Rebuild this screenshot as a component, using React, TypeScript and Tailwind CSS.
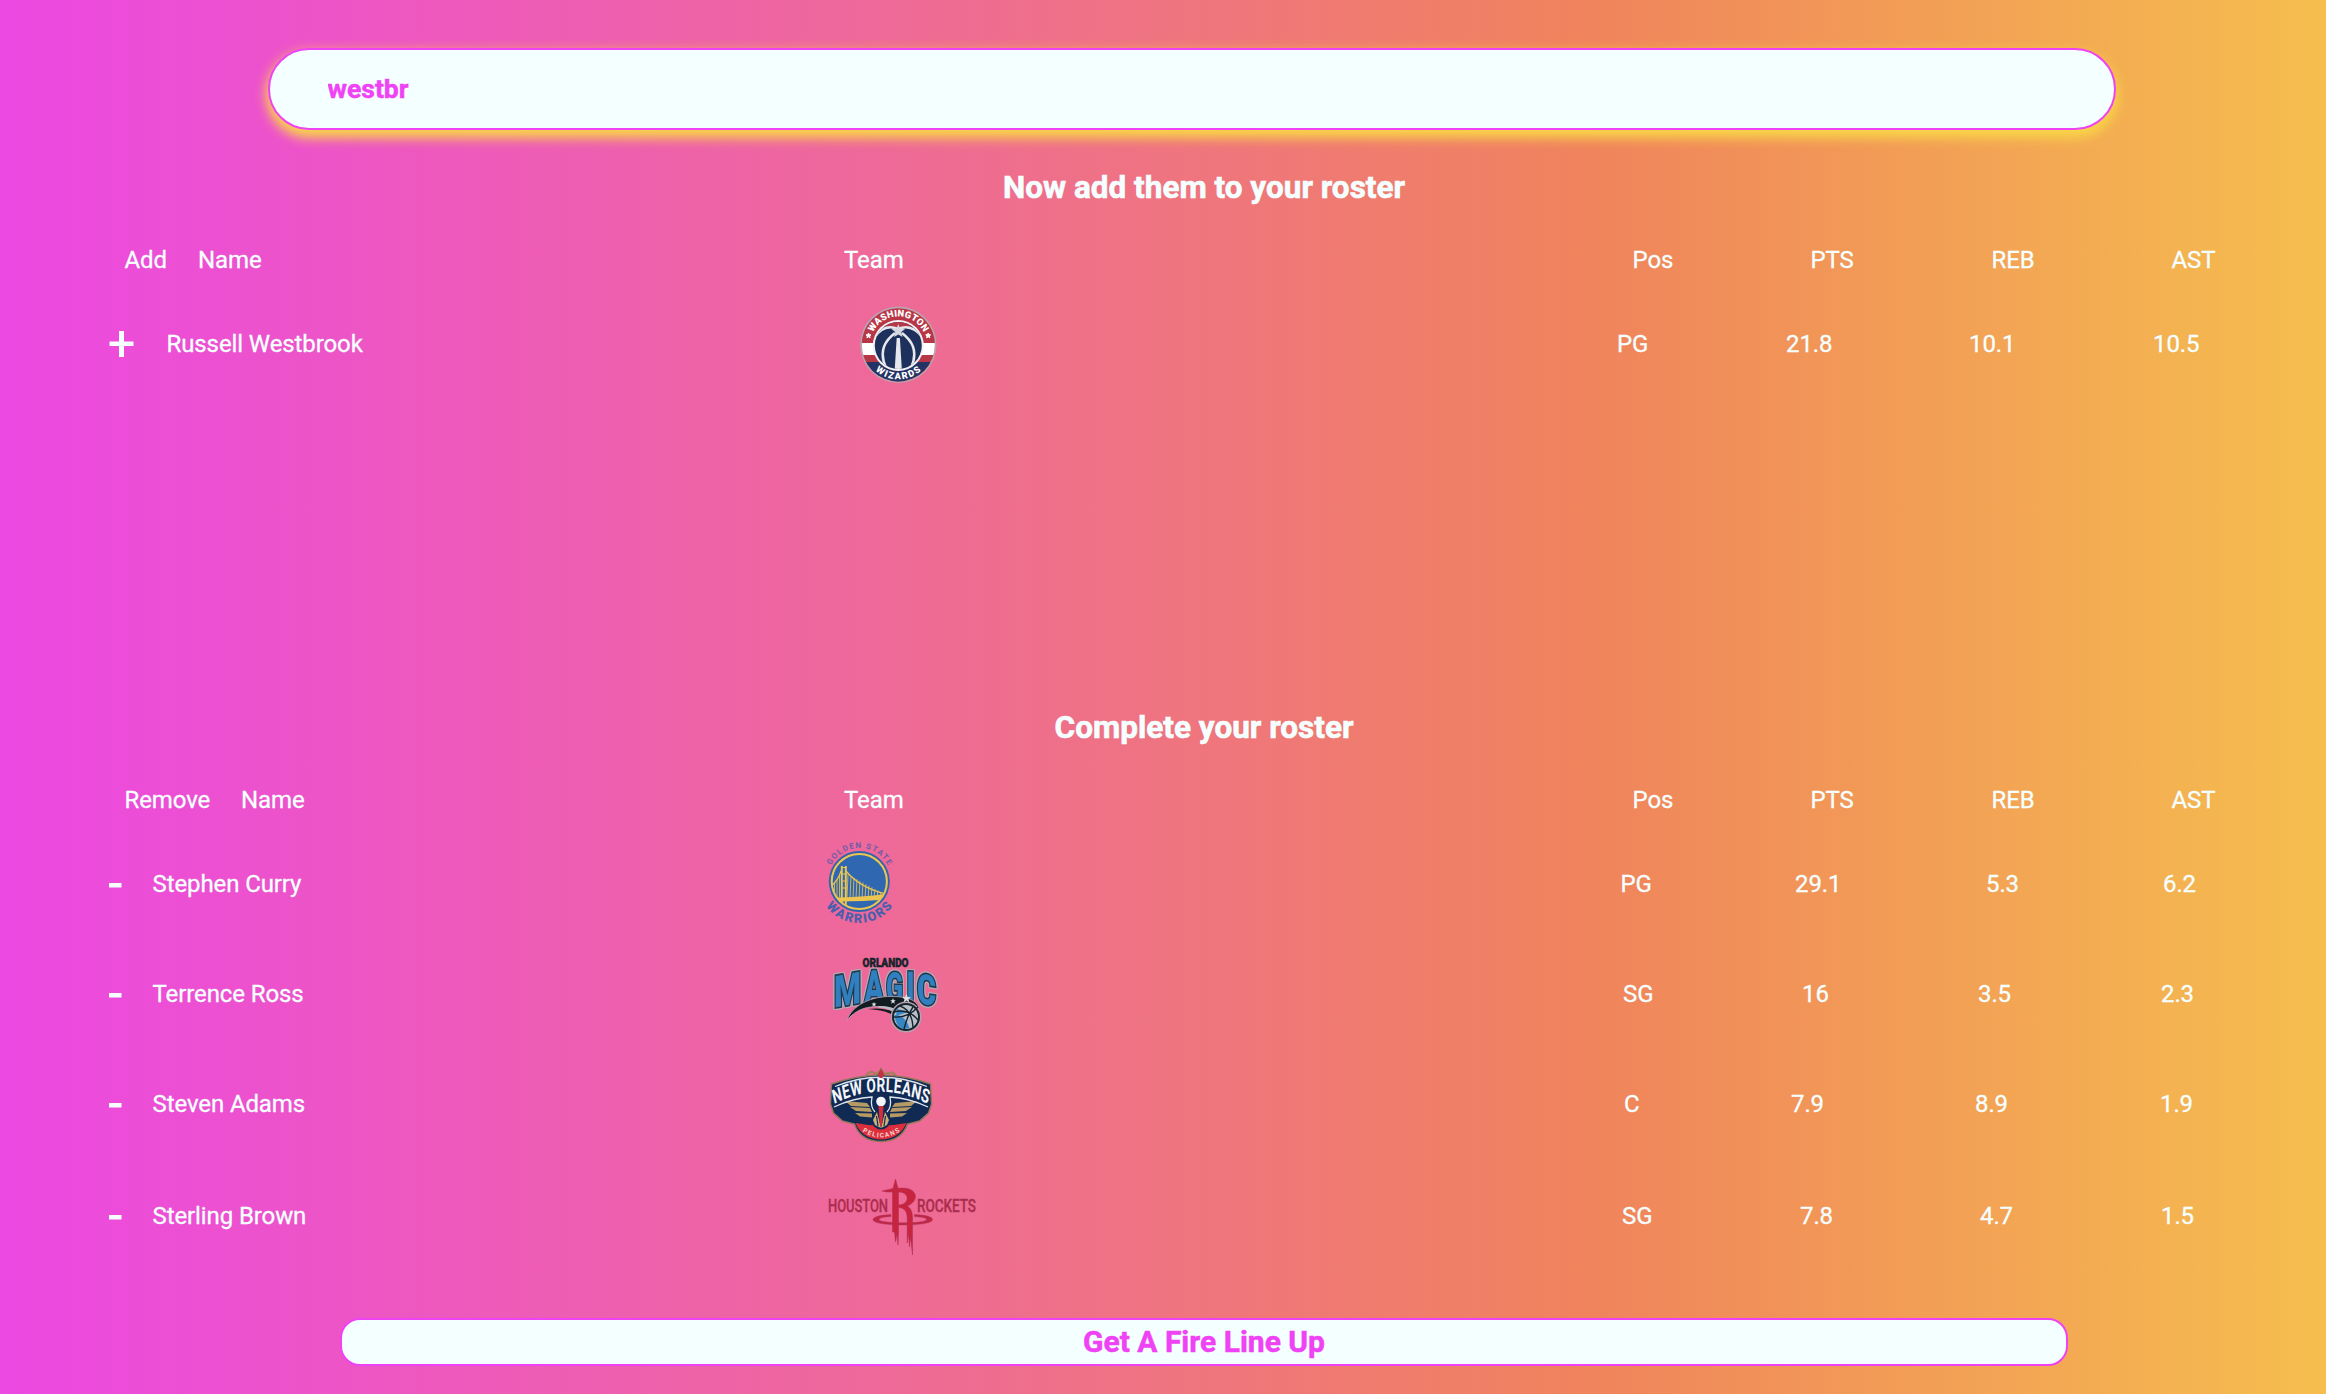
import React from "react";

const LOGO = "h-[110px] w-[180px] translate-y-px overflow-visible";

function Wizards() {
  return (
    <svg viewBox="0 0 180 110" className={LOGO}>
      <defs>
        <clipPath id="wz"><circle cx="88.3" cy="54.8" r="36.6" /></clipPath>
        <clipPath id="wzBall"><circle cx="88.3" cy="55.5" r="23.5" /></clipPath>
        <path id="wzTop" d="M60 54.8a28.3 28.3 0 0 1 56.6 0" />
        <path id="wzBot" d="M53.8 54.8a34.5 34.5 0 0 0 69 0" />
      </defs>
      <circle cx="88.3" cy="54.8" r="38.2" fill="#b9a3ae" />
      <g clipPath="url(#wz)">
        <rect x="50" y="16" width="80" height="80" fill="#b73747" />
        <rect x="50" y="53" width="80" height="12" fill="#fff" />
        <rect x="50" y="72" width="80" height="30" fill="#223364" />
      </g>
      <circle cx="88.3" cy="55.5" r="25.5" fill="#f4f1f4" />
      <circle cx="88.3" cy="55.5" r="23.5" fill="#1e315c" />
      <g clipPath="url(#wzBall)" fill="none">
        <path d="M62 46q8-12 17-9l9 3 9-3q9-3 18 9V26H62z" fill="#b73747" />
        <path d="M64 48q10-15 24-9q14-6 25 9M85 43C76 50 68 60 76 78M92 43c9 7 17 17 9 35" stroke="#e8e8ee" strokeWidth="2.6" />
        <path d="M86.7 48h3.2l2 32h-7.2z" fill="#e6e7ec" />
      </g>
      <path d="m88.3 34 1.8 4.5 5 .4-3.8 3.2 1.2 5-4.2-2.7-4.2 2.7 1.2-5-3.8-3.2 5-.4z" fill="#d5d8df" />
      <path d="m58.5 43 .7 1.7 1.8.1-1.4 1.2.5 1.8-1.6-1-1.6 1 .5-1.8-1.4-1.2 1.8-.1zM118.2 43l.7 1.7 1.8.1-1.4 1.2.5 1.8-1.6-1-1.6 1 .5-1.8-1.4-1.2 1.8-.1z" fill="#fff" stroke="#fff" strokeWidth="1" />
      <text fontFamily="Roboto" fontSize="9.4" fontWeight="900" fill="#fff" textAnchor="middle"><textPath href="#wzTop" startOffset="50%" textLength="63">WASHINGTON</textPath></text>
      <text fontFamily="Roboto" fontSize="9.4" fontWeight="900" fill="#fff" textAnchor="middle"><textPath href="#wzBot" startOffset="50%" textLength="50">WIZARDS</textPath></text>
    </svg>
  );
}

function Warriors() {
  const cables = [38, 41, 44, 47, 50, 53, 56, 59, 62, 65, 68, 71];
  return (
    <svg viewBox="0 0 180 110" className={LOGO}>
      <defs>
        <clipPath id="gs"><circle cx="49.3" cy="51.5" r="27" /></clipPath>
        <path id="gsTop" d="M17.3 50a32 32 0 0 1 64 0" />
        <path id="gsBot" d="M7.8 51.5a41.5 41.5 0 0 0 83 0" />
      </defs>
      <circle cx="49.3" cy="51.5" r="30.5" fill="#3063ad" />
      <circle cx="49.3" cy="51.5" r="27.6" fill="#2f68b1" stroke="#edc54f" strokeWidth="2" />
      <g clipPath="url(#gs)" stroke="#edc54f" fill="none">
        <path d="M20 67.5q30 .5 62-4.5v6q-30 3-62 2.5z" fill="#edc54f" stroke="none" />
        <path d="M31.8 36v52M35.8 36v52" strokeWidth="1.9" />
        <path d="M31 37.5h6M31 44h6M31 51h6M31 58h6" strokeWidth="1.2" />
        <path d="M36 41q15 18 44 24M31 41q-3 10-11 16" strokeWidth="1.2" />
        {cables.map((x, i) => (
          <path key={x} d={`M${x} ${44.5 + i * 1.6}L${x - 1} 68`} strokeWidth=".8" />
        ))}
        <path d="M29.5 46v21M27 50v17M24.5 53v14M22 55v12" strokeWidth=".8" />
      </g>
      <text fontFamily="Roboto" fontSize="8" fontWeight="700" fill="#6f5da8" textAnchor="middle"><textPath href="#gsTop" startOffset="50%" textLength="70">GOLDEN STATE</textPath></text>
      <text fontFamily="Roboto" fontSize="12.8" fontWeight="900" fill="#485fab" textAnchor="middle"><textPath href="#gsBot" startOffset="50%" textLength="77">WARRIORS</textPath></text>
    </svg>
  );
}

const MAGIC_LETTERS = [
  { ch: "M", w: 27, h: 44, t: "translate(24 67.5) skewY(-10)" },
  { ch: "A", w: 19, h: 44, t: "translate(54.5 62) skewY(-2)" },
  { ch: "G", w: 17, h: 43, t: "translate(76 61.5)" },
  { ch: "I", w: 8, h: 43, t: "translate(96.5 62) skewY(3)" },
  { ch: "C", w: 19, h: 42, t: "translate(107 63) skewY(9)" },
];

function Magic() {
  return (
    <svg viewBox="0 0 180 110" className={LOGO}>
      <g
        fill="#2f7fc1"
        stroke="#243746"
        strokeWidth="3.2"
        fontFamily="Roboto"
        fontWeight="900"
        className="[filter:drop-shadow(1px_0_0_#b3a9b6)_drop-shadow(-1px_0_0_#b3a9b6)_drop-shadow(0_1px_0_#b3a9b6)_drop-shadow(0_-1px_0_#b3a9b6)] [paint-order:stroke]"
      >
        {MAGIC_LETTERS.map((l) => (
          <text key={l.ch} transform={l.t} fontSize={l.h} textLength={l.w} lengthAdjust="spacingAndGlyphs">{l.ch}</text>
        ))}
      </g>
      <text x="75.5" y="27" textLength="46" lengthAdjust="spacingAndGlyphs" textAnchor="middle" fontFamily="Roboto" fontSize="12.5" fontWeight="900" fill="#17242c" stroke="#17242c" strokeWidth=".5">ORLANDO</text>
      <path d="M37 80C42 66 60 56 82 56.5c14 0 24 3 27 11l-20 6c-4-6-18-8-28-6.5-10 1-18 6-24 13z" fill="#111b22" stroke="#b9a5b3" strokeWidth=".8" />
      <path d="M58 69q14-2 27 3l-2 3q-7-4-16-5z" fill="#111b22" />
      <path d="M68 66q14-1 21 6l-2 2q-8-6-19-6.5z" fill="#b7bdc3" />
      <circle cx="96" cy="77" r="15.4" fill="#b3a4ae" />
      <circle cx="96" cy="77" r="14" fill="#17242d" />
      <circle cx="96" cy="77" r="12" fill="#b7c0c8" />
      <path d="M84.5 75q10-1 15 13l-5 1q-9-1-10-14zM87 69l11 3-12 4z" fill="#3486c5" />
      <path d="M84 77q14 1 24-10M90 66q12 4 13 21M84 72q14-4 24 8M94 89q4-15 9-22" fill="none" stroke="#17242d" strokeWidth="1.4" />
      <path d="m96.5 54 1.2 3 3.3.2-2.5 2 .9 3.1-2.9-1.8-2.8 1.8.8-3.1-2.5-2 3.2-.2zM83 58l.8 2.2h2l-1.6 1.4.6 2.1-1.8-1.2-1.8 1.2.6-2.1-1.6-1.4h2zM64 62l.7 1.6h1.8l-1.4 1.2.5 1.8-1.6-1-1.6 1 .5-1.8-1.4-1.2h1.8z" fill="#dde1e4" />
    </svg>
  );
}

function Pelicans() {
  return (
    <svg viewBox="0 0 180 110" className={LOGO}>
      <defs>
        <path id="pelArc" d="M33.5 54.5Q101.4 29 169.3 54.5" />
        <path id="pelBot" d="M46 77Q71 98 96 77" />
      </defs>
      <path d="M56 25q4-5 8-2l3 1 4-5 4 5 4-1q4-2 7 3" fill="none" stroke="#a37f5c" strokeWidth="2" />
      <path d="M21.5 34Q45 26 68 25l3-6 3 6q24 1 46.5 9l1 20-3 9-9 8-12 3q-6 17-26.5 17.5Q50 91 44.5 74l-12-3-9-8-3-9z" fill="#102a54" stroke="#8f7758" strokeWidth="1.4" />
      <path d="M45.5 73q26 5 51 0-7 16-25.5 16.5Q52 89 45.5 73z" fill="#dc2f3b" />
      <path d="M35 51l22 2 3 4-19-1zM40 57l20 1 2 4-16-1zM45 63l17 .5v4l-12-1zM107 51l-22 2-3 4 19-1zM102 57l-20 1-2 4 16-1zM97 63l-17 .5v4l12-1z" fill="#b59a63" />
      <path d="M25 36.5Q71 18 117 36.5M24 57Q43 48 62 47q-2 10 3 15M118 57Q99 48 80 47q2 10-3 15" fill="none" stroke="#dfe5ef" strokeWidth="1.3" />
      <circle cx="71" cy="70" r="9.5" fill="#102a54" />
      <path d="M63 70l4-8 4 16 4-16 4 8-2 5-6 3-6-3z" fill="#c9b178" />
      <path d="M66.5 66l1.5 10M75.5 66l-1.5 10" stroke="#102a54" strokeWidth="1.2" />
      <circle cx="71" cy="51.5" r="4.8" fill="#f3f4f7" />
      <path d="M68.5 56h5l-1 16-1.5 6-1.5-6z" fill="#d32e3c" />
      <path d="m71 19 3 5-2 5h-2l-2-5z" fill="#c92f44" />
      <g transform="scale(.7 1)">
        <text fontFamily="Roboto" fontSize="19.5" fontWeight="700" fill="#f5f7fa" textAnchor="middle"><textPath href="#pelArc" startOffset="50%" textLength="137">NEW ORLEANS</textPath></text>
      </g>
      <text fontFamily="Roboto" fontSize="6.5" fontWeight="800" fill="#f6c9cc" textAnchor="middle"><textPath href="#pelBot" startOffset="50%" textLength="40">PELICANS</textPath></text>
    </svg>
  );
}

function Rockets() {
  return (
    <svg viewBox="0 0 180 110" className={LOGO}>
      <g fontFamily="Roboto" fontSize="17.5" fontWeight="500" fill="#b02c4c" stroke="#9d3350" strokeWidth=".3">
        <text x="18" y="49.8" textLength="60" lengthAdjust="spacingAndGlyphs">HOUSTON</text>
        <text x="107" y="49.8" textLength="59" lengthAdjust="spacingAndGlyphs">ROCKETS</text>
      </g>
      <path d="M81 52.6C70 53 63 55 63 57.6c0 3.4 12 5.4 30 5.4s29.5-2 29.5-5.4c0-2.8-7-4.6-18-5v2c8 .4 12 1.6 12 3 0 2-9 3.2-23.5 3.2s-24-1.2-24-3.2c0-1.5 4-2.6 12-3z" fill="#bf2848" stroke="#a93350" strokeWidth=".4" />
      <path d="M82.5 70V28L85.5 17l3 11v42l-.5 13-1-11-1.5 8-1-10z" fill="#c8233f" stroke="#a93350" strokeWidth=".5" />
      <path d="M72 29q10-3 20-3c17 0 17 14 5 18 4 2 5.5 6 5.5 12v37l-2-18-1 10-1-13-1.3 9V57c0-7-2-11-8.7-11.5v-2.5c11 0 12-13 0-13-6 0-12 .5-16.5-1z" fill="#c8233f" stroke="#a93350" strokeWidth=".5" />
    </svg>
  );
}

type Row = { cols: string; cells: string[] };

function HeaderRow({ cols, cells }: Row) {
  return (
    <div className={`grid h-7 items-center whitespace-nowrap ${cols}`}>
      <span />
      {cells.map((c, i) => <span key={i}>{c}</span>)}
    </div>
  );
}

function PlayerRow({ cols, cells, sign, height, logo }: Row & { sign: "+" | "-"; height: string; logo: React.ReactNode }) {
  return (
    <div className={`grid items-center whitespace-nowrap ${height} ${cols}`}>
      <span />
      <button className="flex h-7 items-center">
        {sign === "+" ? (
          <svg viewBox="0 0 26 28" className="h-7 w-[26px]" fill="#f5ffff"><path d="M10 1h5v10.5h9.500v4.500H15v11h-5V16H.5v-4.500H10z" /></svg>
        ) : (
          <svg viewBox="0 0 14 28" className="h-7 w-[14px]" fill="#f5ffff"><path d="M0 13h12.500v4.500H0z" /></svg>
        )}
      </button>
      <span>{cells[0]}</span>
      {logo}
      {cells.slice(1).map((c, i) => <span key={i}>{c}</span>)}
    </div>
  );
}

export default function App() {
  return (
    <main className="flex h-[1394px] w-[2326px] flex-col overflow-hidden bg-[linear-gradient(to_right,#ec48e3_0%,#f0845c_68.5%,#f5be4e_100%)] font-['Roboto',sans-serif] text-[24px] leading-7 tracking-[-0.1px] text-[#f5ffff] [-webkit-text-stroke:0.3px]">
      <input
        defaultValue="westbr"
        className="mt-12 ml-[268px] h-[82px] w-[1848px] shrink-0 rounded-[41px] border-2 border-[#ef42f5] bg-[#f4ffff] px-[57.5px] pb-0.5 text-[26.5px] font-bold tracking-normal text-[#ef42f5] shadow-[0_6px_12px_2px_#f9d648] outline-none [-webkit-text-stroke:0.5px]"
      />
      <h2 className="mt-[38px] ml-[82px] h-10 text-center text-[31.5px] leading-10 font-bold tracking-normal [-webkit-text-stroke:0.6px]">Now add them to your roster</h2>
      <section className="mt-[38px] h-[462px]">
        <HeaderRow cols="grid-cols-[124.5px_73.5px_646px_788.5px_178px_181px_180px_1fr]" cells={["Add", "Name", "Team", "Pos", "PTS", "REB", "AST"]} />
        <PlayerRow sign="+" height="mt-[15px] h-[110px]" logo={<Wizards />} cols="grid-cols-[109px_57.5px_643.5px_807px_169px_183px_184px_1fr]" cells={["Russell Westbrook", "PG", "21.8", "10.1", "10.5"]} />
      </section>
      <h2 className="ml-[82px] h-10 text-center text-[31.5px] leading-10 font-bold tracking-normal [-webkit-text-stroke:0.6px]">Complete your roster</h2>
      <section className="mt-[38px]">
        <HeaderRow cols="grid-cols-[124.5px_116.5px_603px_788.5px_178px_181px_180px_1fr]" cells={["Remove", "Name", "Team", "Pos", "PTS", "REB", "AST"]} />
        <div className="mt-[15px]">
          <PlayerRow sign="-" height="h-[110px]" logo={<Warriors />} cols="grid-cols-[109px_43.5px_657.5px_810.5px_174.5px_191px_177px_1fr]" cells={["Stephen Curry", "PG", "29.1", "5.3", "6.2"]} />
          <PlayerRow sign="-" height="h-[110px]" logo={<Magic />} cols="grid-cols-[109px_43.5px_657.5px_813px_179px_176px_183px_1fr]" cells={["Terrence Ross", "SG", "16", "3.5", "2.3"]} />
          <PlayerRow sign="-" height="h-[110px]" logo={<Pelicans />} cols="grid-cols-[109px_43.5px_657.5px_814px_167px_184px_185px_1fr]" cells={["Steven Adams", "C", "7.9", "8.9", "1.9"]} />
          <PlayerRow sign="-" height="h-[114px]" logo={<Rockets />} cols="grid-cols-[109px_43.5px_657.5px_812px_178px_180px_181px_1fr]" cells={["Sterling Brown", "SG", "7.8", "4.7", "1.5"]} />
        </div>
      </section>
      <button className="mt-auto mb-7 ml-[340px] h-12 w-[1728px] shrink-0 rounded-[20px] border-2 border-[#ef42f5] bg-[#f4ffff] text-[30px] leading-none font-bold tracking-normal text-[#ef42f5] [-webkit-text-stroke:0.5px]">
        Get A Fire Line Up
      </button>
    </main>
  );
}
